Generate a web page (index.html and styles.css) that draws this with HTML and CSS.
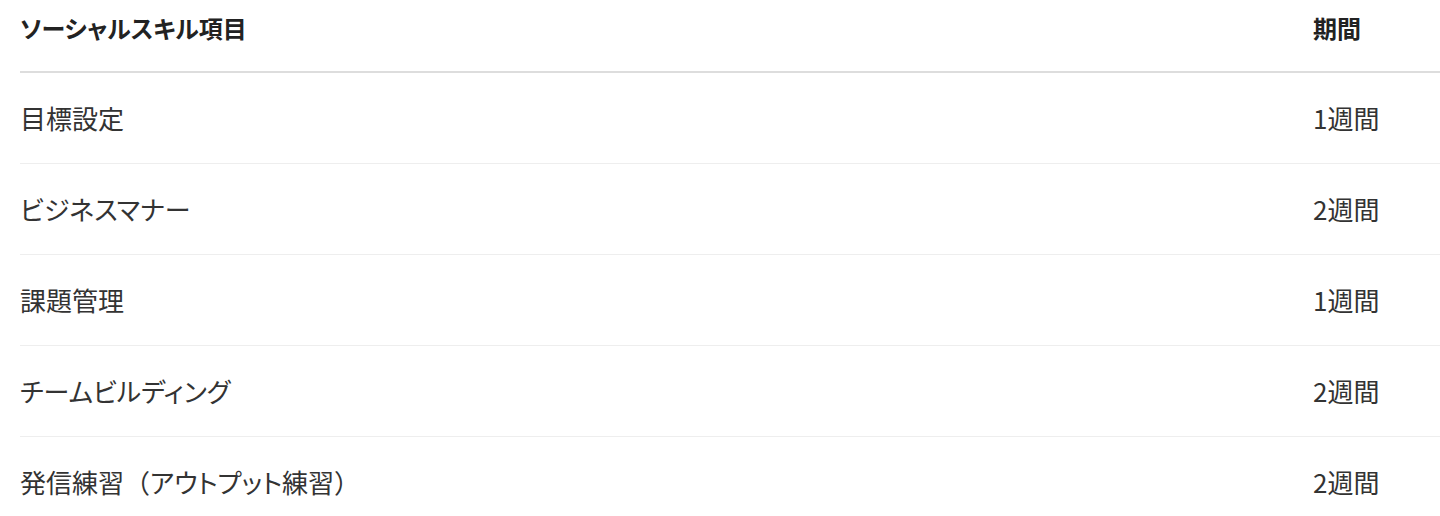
FILE: index.html
```html
<!DOCTYPE html>
<html lang="ja">
<head>
<meta charset="utf-8">
<link rel="stylesheet" href="styles.css">
</head>
<body>
<table class="skills">
  <thead>
    <tr><th class="col-name">ソーシャルスキル項目</th><th class="col-term">期間</th></tr>
  </thead>
  <tbody>
    <tr><td>目標設定</td><td>1週間</td></tr>
    <tr><td>ビジネスマナー</td><td>2週間</td></tr>
    <tr><td>課題管理</td><td>1週間</td></tr>
    <tr><td>チームビルディング</td><td>2週間</td></tr>
    <tr><td>発信練習<span class="paren">（</span>アウトプット練習<span class="paren">）</span></td><td>2週間</td></tr>
  </tbody>
</table>
</body>
</html>
```

FILE: styles.css
```css
html, body {
  margin: 0;
  background: #fff;
}
body {
  padding: 0 0 0 20px;
  font-family: "Noto Sans CJK JP", "Noto Sans", sans-serif;
  color: #333;
  overflow: hidden;
}
.skills {
  width: 1420px;
  border-collapse: collapse;
}
.skills th,
.skills td {
  text-align: left;
  padding: 0;
  font-size: 26px;
  line-height: 36px;
  font-feature-settings: "palt";
}
.skills th {
  font-size: 24px;
  font-weight: 700;
  color: #222;
  padding: 10px 0 25px;
  border-bottom: 2px solid #ddd;
}
.skills td {
  padding: 27px 0;
  border-bottom: 1px solid #eee;
}
.skills tbody tr:last-child td {
  border-bottom: none;
}
.paren {
  font-feature-settings: normal;
}
.col-term {
  width: 127px;
}
```
